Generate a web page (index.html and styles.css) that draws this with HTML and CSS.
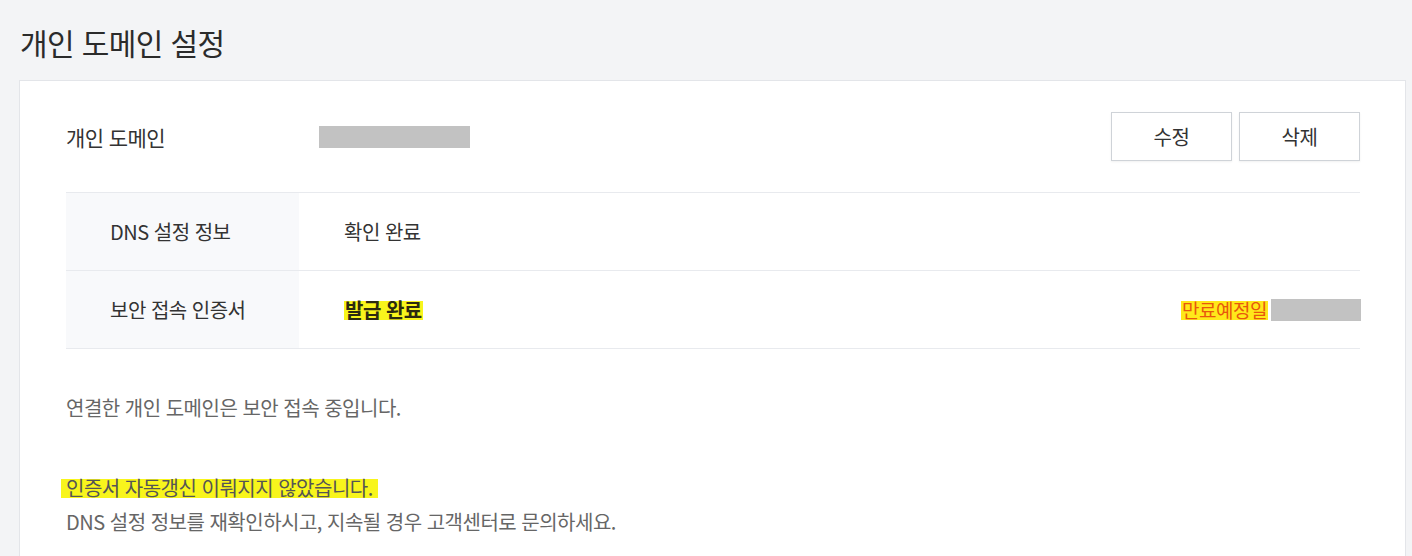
FILE: index.html
```html
<!DOCTYPE html>
<html lang="ko">
<head>
  <meta charset="UTF-8">
  <meta name="viewport" content="width=device-width, initial-scale=1.0">
  <title>개인 도메인 설정</title>
  <link rel="stylesheet" href="styles.css">
</head>
<body>
  <h1 class="page-title">개인 도메인 설정</h1>

  <div class="card">
    <div class="domain-row">
      <span class="domain-label">개인 도메인</span>
      <span class="masked masked-domain"></span>
      <div class="actions">
        <button class="btn">수정</button>
        <button class="btn">삭제</button>
      </div>
    </div>

    <table class="info-table">
      <tr>
        <th>DNS 설정 정보</th>
        <td>확인 완료</td>
        <td class="expire"></td>
      </tr>
      <tr>
        <th>보안 접속 인증서</th>
        <td><mark class="hl hl-dark">발급 완료</mark></td>
        <td class="expire">
          <div class="expire-box">
            <mark class="hl hl-orange">만료예정일</mark>
            <span class="masked masked-date"></span>
          </div>
        </td>
      </tr>
    </table>

    <p class="note">연결한 개인 도메인은 보안 접속 중입니다.</p>

    <div class="warning">
      <p class="warning-title"><mark class="hl">인증서 자동갱신 이뤄지지 않았습니다.</mark></p>
      <p class="note">DNS 설정 정보를 재확인하시고, 지속될 경우 고객센터로 문의하세요.</p>
    </div>
  </div>
</body>
</html>
```

FILE: styles.css
```css
body {
  margin: 0;
  padding: 0 6px 0 19px;
  background: #f3f4f6;
  font-family: "Noto Sans CJK KR", "Noto Sans", sans-serif;
  color: #333;
}
.page-title {
  margin: 0;
  padding: 22px 0 18px 1px;
  font-size: 30px;
  font-weight: 400;
  line-height: 40px;
  color: #2b2b2b;
  letter-spacing: -0.6px;
}
.card {
  background: #fff;
  border: 1px solid #e3e5e9;
  padding: 31px 45px 40px 46px;
  min-height: 480px;
}
.domain-row {
  display: flex;
  align-items: center;
  height: 49px;
  padding-bottom: 31px;
  border-bottom: 1px solid #e8eaee;
}
.domain-label {
  width: 253px;
  font-size: 21px;
  color: #333;
  letter-spacing: -0.6px;
}
.masked {
  display: inline-block;
  background: #c2c2c2;
}
.masked-domain {
  width: 151px;
  height: 22px;
}
.actions {
  margin-left: auto;
  display: flex;
  gap: 7px;
}
.btn {
  width: 121px;
  height: 49px;
  background: #fff;
  border: 1px solid #cfd3d8;
  box-shadow: 0 1px 2px rgba(0, 0, 0, 0.06);
  font-family: inherit;
  font-size: 20px;
  color: #333;
  letter-spacing: -0.5px;
  cursor: pointer;
}
.info-table {
  width: 100%;
  border-collapse: collapse;
}
.info-table th,
.info-table td {
  height: 75px;
  border-bottom: 1px solid #e8eaee;
  font-size: 20px;
  font-weight: 400;
  text-align: left;
  letter-spacing: -0.5px;
}
.info-table th {
  width: 188px;
  padding-left: 44px;
  background: #f8f9fb;
  color: #333;
}
.info-table td {
  padding-left: 45px;
  color: #333;
}
.info-table td.expire {
  padding: 0;
  text-align: right;
}
.expire-box {
  display: inline-flex;
  align-items: center;
  gap: 3px;
  margin-right: -1px;
}
.masked-date {
  width: 90px;
  height: 22px;
}
.hl {
  background: linear-gradient(transparent 22%, #f8f51c 22%, #f8f51c 86%, transparent 86%);
  color: #333;
  padding: 0 1px;
}
.hl-dark {
  font-weight: 700;
  color: #2c2a10;
}
.hl-orange {
  color: #e8580c;
  background: linear-gradient(transparent 20%, #ffe81a 20%, #ffe81a 88%, transparent 88%);
  font-size: 19px;
}
.note {
  margin: 0;
  font-size: 20px;
  line-height: 34px;
  color: #666;
  letter-spacing: -0.5px;
}
.card > .note {
  margin-top: 42px;
}
.warning {
  margin-top: 46px;
}
.warning-title {
  margin: 0 0 0 -5px;
  font-size: 20px;
  line-height: 34px;
  letter-spacing: -0.5px;
}
.warning-title .hl {
  color: #555;
  padding: 0 5px;
}
```
